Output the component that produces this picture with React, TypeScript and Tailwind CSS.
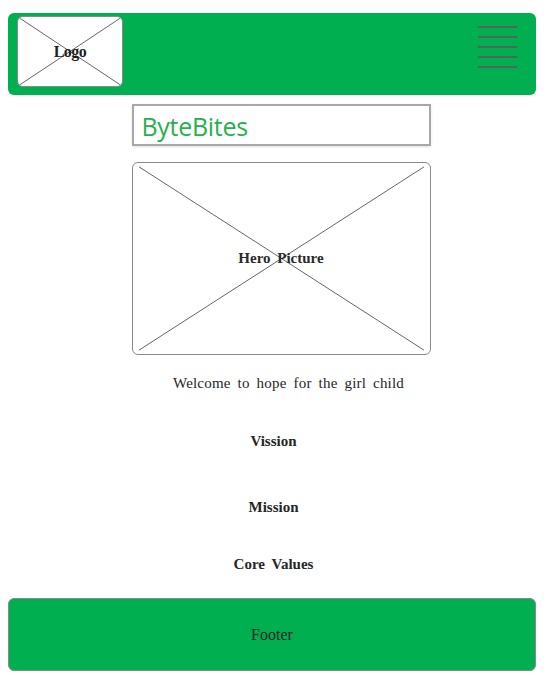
import React from "react";

const CrossBox = ({ className, label, labelClass }: { className: string; label: string; labelClass: string }) => {
  return (
    <div className={`relative overflow-hidden bg-white border border-[#8a8a8a] rounded-md ${className}`}>
      <svg className="absolute inset-0 w-full h-full" preserveAspectRatio="none" viewBox="0 0 100 100">
        <line x1="2" y1="2" x2="98" y2="98" stroke="#666" strokeWidth="1" vectorEffect="non-scaling-stroke" />
        <line x1="98" y1="2" x2="2" y2="98" stroke="#666" strokeWidth="1" vectorEffect="non-scaling-stroke" />
      </svg>
      <div className="absolute inset-0 flex items-center justify-center">
        <span className={labelClass}>{label}</span>
      </div>
    </div>
  );
};

const App = () => {
  return (
    <div className="w-[547px] h-[686px] bg-white flex flex-col items-center font-['Liberation_Serif',serif] text-[#262626]">
      <header className="mt-[13px] mr-[3px] w-[528px] h-[82px] bg-[#00af50] rounded-md flex items-start justify-between">
        <CrossBox
          className="ml-[9px] mt-[3px] w-[106px] h-[71px]"
          label="Logo"
          labelClass="text-[16px] font-bold tracking-[-0.5px] text-[#1f1f1f]"
        />
        <div className="mt-[13px] mr-[19px] flex flex-col gap-[8px]">
          <div className="w-[39px] h-[2px] bg-[#55645c]" />
          <div className="w-[39px] h-[2px] bg-[#55645c]" />
          <div className="w-[39px] h-[2px] bg-[#55645c]" />
          <div className="w-[39px] h-[2px] bg-[#55645c]" />
          <div className="w-[39px] h-[2px] bg-[#55645c]" />
        </div>
      </header>

      <div className="mt-[9px] ml-[15px] w-[299px] h-[42px] border-2 border-[#a8a8a8] shadow-sm flex items-center pl-[8px]">
        <span className="font-['Open_Sans',sans-serif] text-[25px] text-[#27b04d] leading-none mt-[3px] tracking-[-0.3px]">ByteBites</span>
      </div>

      <CrossBox
        className="mt-[16px] ml-[15px] w-[299px] h-[193px]"
        label="Hero Picture"
        labelClass="text-[15px] font-bold [word-spacing:3px] text-[#2a2a2a]"
      />

      <p className="mt-[18px] ml-[30px] text-[15px] [word-spacing:3px] tracking-[0.2px] leading-[20px]">
        Welcome to hope for the girl child
      </p>

      <p className="mt-[38px] text-[15px] font-bold leading-[20px]">Vission</p>
      <p className="mt-[46px] text-[15px] font-bold leading-[20px]">Mission</p>
      <p className="mt-[37px] text-[15px] font-bold [word-spacing:3px] leading-[20px]">Core Values</p>

      <footer className="mt-[24px] mr-[3px] w-[528px] h-[73px] bg-[#00af50] border border-[#8a8a8a] rounded-md flex items-center justify-center">
        <span className="text-[16px] text-[#222]">Footer</span>
      </footer>
    </div>
  );
};

export default App;
